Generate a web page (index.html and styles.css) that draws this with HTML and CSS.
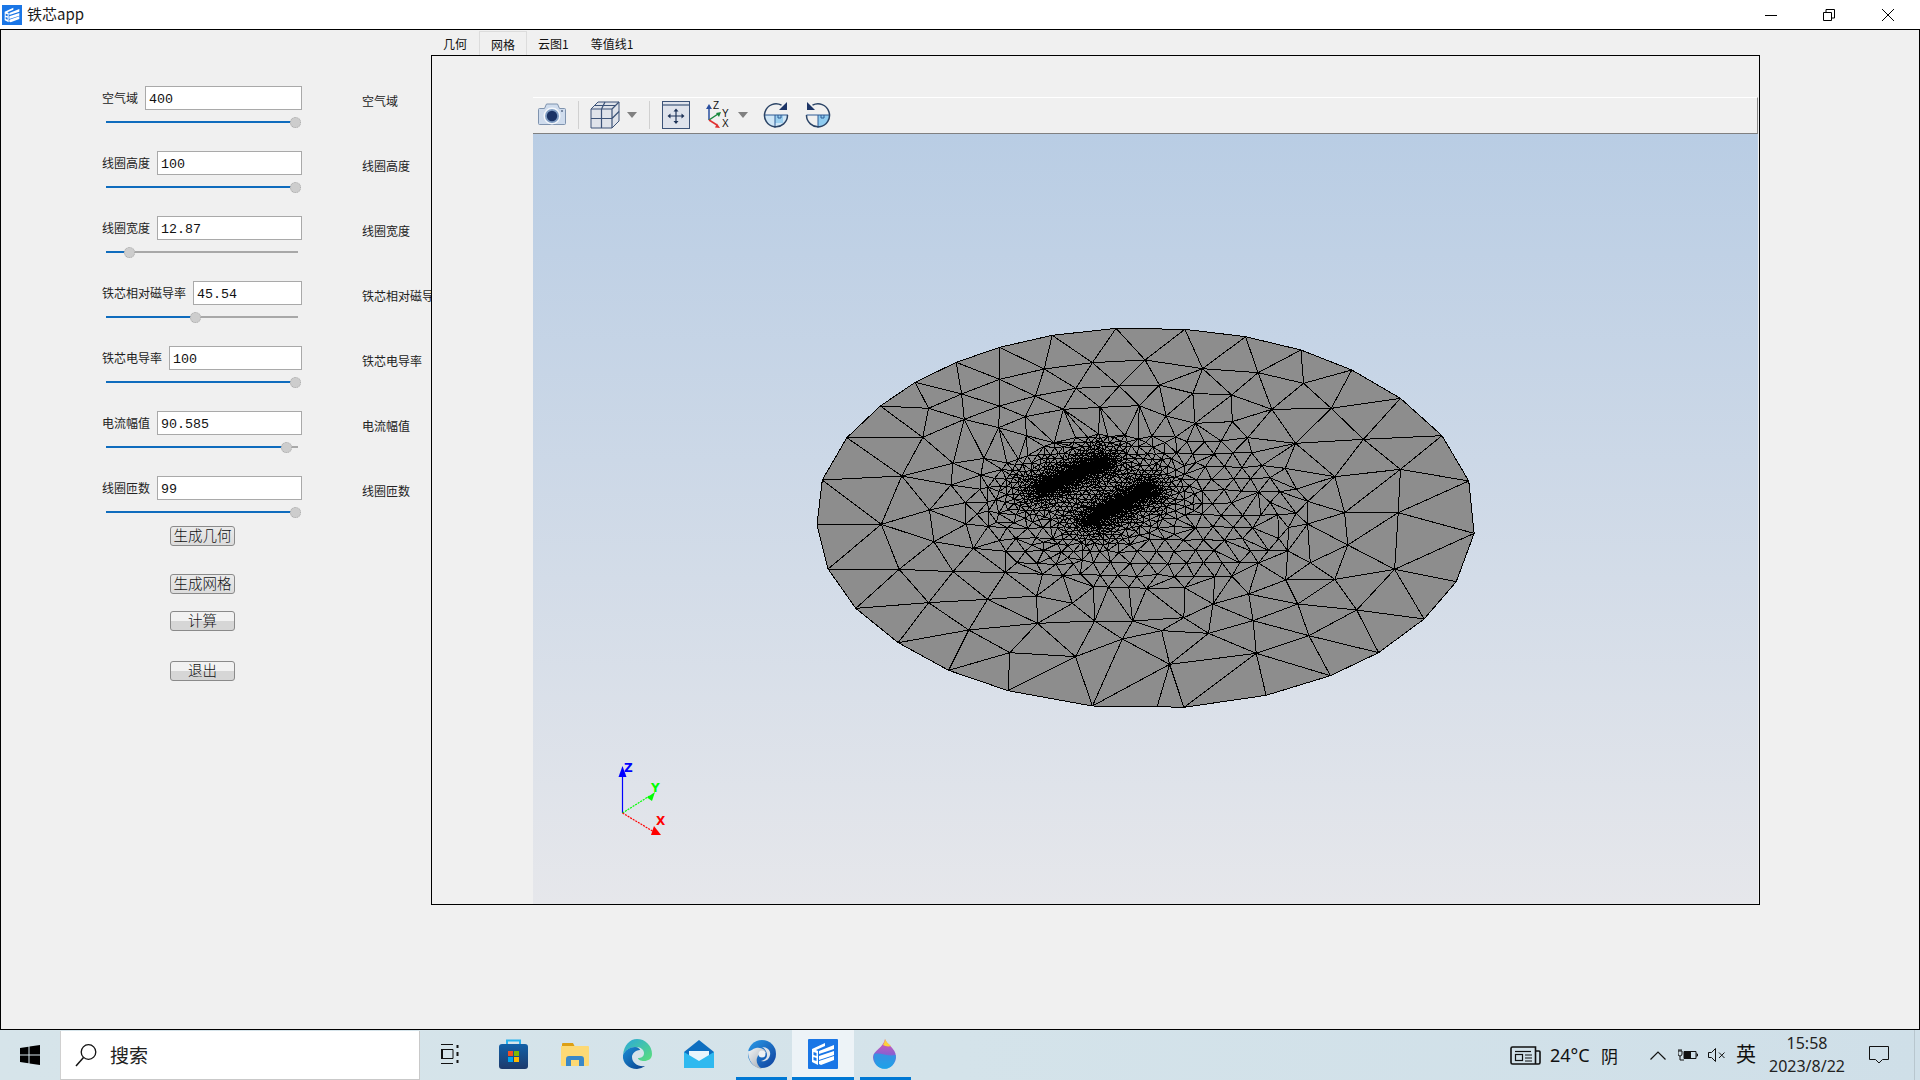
FILE: index.html
```html
<!DOCTYPE html>
<html lang="zh-CN">
<head>
<meta charset="utf-8">
<title>铁芯app</title>
<link rel="stylesheet" href="styles.css">
</head>
<body>
<div class="titlebar">
  <svg class="app-icon" width="20" height="20" viewBox="0 0 30 30"><rect width="30" height="30" fill="#1a76e6"/><path d="M4 10 17 4v3L8 11l2 1v14l-6-3z" fill="#fff"/><path d="M11 12l15-6v4l-15 5zM11 17l15-5v4l-15 5zM11 22l15-5v4l-13 5-2-1z" fill="#fff"/><path d="M5.500 13l3 1v3l-3-1zM5.500 18l3 1v3l-3-1z" fill="#1a76e6"/></svg>
  <span class="app-title">铁芯app</span>
  <div class="controls">
    <span class="ctl"><svg width="14" height="14" viewBox="0 0 14 14"><path d="M1 7.500h12" stroke="#000" fill="none"/></svg></span>
    <span class="ctl"><svg width="14" height="14" viewBox="0 0 14 14"><path d="M1.500 4.500h8v8h-8zM4 4.500V1.500h8.500v8.500h-3" stroke="#000" fill="none"/></svg></span>
    <span class="ctl"><svg width="14" height="14" viewBox="0 0 14 14"><path d="M1 1l12 12M13 1L1 13" stroke="#000" fill="none"/></svg></span>
  </div>
</div>

<div class="main">
  <div class="fields">
    <div class="field">
      <div class="field-head"><label class="field-label">空气域</label><input class="field-input" value="400"></div>
      <div class="slider"><div class="slider-fill" style="width:189px"></div><div class="slider-knob" style="left:189px"></div></div>
    </div>
    <div class="field">
      <div class="field-head"><label class="field-label">线圈高度</label><input class="field-input" value="100"></div>
      <div class="slider"><div class="slider-fill" style="width:189px"></div><div class="slider-knob" style="left:189px"></div></div>
    </div>
    <div class="field">
      <div class="field-head"><label class="field-label">线圈宽度</label><input class="field-input" value="12.87"></div>
      <div class="slider"><div class="slider-fill" style="width:23px"></div><div class="slider-knob" style="left:23px"></div></div>
    </div>
    <div class="field">
      <div class="field-head"><label class="field-label">铁芯相对磁导率</label><input class="field-input" value="45.54"></div>
      <div class="slider"><div class="slider-fill" style="width:89px"></div><div class="slider-knob" style="left:89px"></div></div>
    </div>
    <div class="field">
      <div class="field-head"><label class="field-label">铁芯电导率</label><input class="field-input" value="100"></div>
      <div class="slider"><div class="slider-fill" style="width:189px"></div><div class="slider-knob" style="left:189px"></div></div>
    </div>
    <div class="field">
      <div class="field-head"><label class="field-label">电流幅值</label><input class="field-input" value="90.585"></div>
      <div class="slider"><div class="slider-fill" style="width:180px"></div><div class="slider-knob" style="left:180px"></div></div>
    </div>
    <div class="field">
      <div class="field-head"><label class="field-label">线圈匝数</label><input class="field-input" value="99"></div>
      <div class="slider"><div class="slider-fill" style="width:189px"></div><div class="slider-knob" style="left:189px"></div></div>
    </div>
    <div class="actions">
      <button class="btn btn-a">生成几何</button>
      <button class="btn btn-b">生成网格</button>
      <button class="btn btn-c btn-split">计算</button>
      <button class="btn btn-d btn-split">退出</button>
    </div>
  </div>

  <div class="value-labels">
    <div class="value-label">空气域</div>
    <div class="value-label">线圈高度</div>
    <div class="value-label">线圈宽度</div>
    <div class="value-label">铁芯相对磁导率</div>
    <div class="value-label">铁芯电导率</div>
    <div class="value-label">电流幅值</div>
    <div class="value-label">线圈匝数</div>
  </div>

  <div class="tabs">
    <div class="tabbar">
      <span class="tab">几何</span>
      <span class="tab tab-active">网格</span>
      <span class="tab tab-narrow">云图1</span>
      <span class="tab tab-narrow">等值线1</span>
    </div>
    <div class="panel">
      <div class="viewer">
        <div class="toolbar">
          <svg class="tb-camera" width="28" height="23" viewBox="0 0 28 23"><path d="M1.500 5.500h5l2-4.500h11l2 4.500h5a1 1 0 0 1 1 1v14a1 1 0 0 1-1 1h-25a1 1 0 0 1-1-1v-14a1 1 0 0 1 1-1z" fill="#cfdced" stroke="#7f93ae"/><circle cx="14" cy="13" r="8.500" fill="#f4f7fb"/><circle cx="14" cy="13" r="7" fill="#7f9cc2"/><circle cx="14" cy="13" r="5.200" fill="#1c3466"/><circle cx="24" cy="8" r="1" fill="#5c6f8c"/></svg>
          <span class="tb-sep tb-sep-1"></span>
          <svg class="tb-cube" width="30" height="28" viewBox="0 0 30 28"><path d="M1 8 8 1h21v19l-7 7H1z" fill="#dfe3ea" stroke="#3c5378"/><path d="M1 8h21v19M22 8l7-7M1 17.500h21M11.500 8v19M4.500 4.500h21M15 1l-3.500 7M22 17.500l7-7" fill="none" stroke="#3c5378" stroke-width="1.200"/></svg>
          <svg class="tb-arrow tb-arrow-1" width="10" height="6" viewBox="0 0 10 6"><path d="M0 0h10L5 6z" fill="#808080"/></svg>
          <span class="tb-sep tb-sep-2"></span>
          <svg class="tb-fit" width="28" height="28" viewBox="0 0 28 28"><rect x=".5" y=".5" width="27" height="27" fill="#dfe3ec" stroke="#3c5378"/><path d="M1 4h26" stroke="#3c5378" stroke-width="1.200"/><path d="M14 10v10M8 15h12" stroke="#1e3358" stroke-width="1.200"/><path d="M14 7.500l2.500 3h-5zM14 23l2.500-3h-5zM5.500 15l3-2.500v5zM22.500 15l-3-2.500v5z" fill="#1e3358"/></svg>
          <svg class="tb-axes" width="32" height="30" viewBox="0 0 32 30"><path d="M4 20V7" stroke="#2a4fa0" stroke-width="1.500"/><path d="M4 4l3 5H1z" fill="#2a4fa0"/><path d="M4 20l9-6" stroke="#18883c" stroke-width="1.500"/><path d="M16 12l-2 5-3-4z" fill="#18883c"/><path d="M4 20l8 5" stroke="#e03030" stroke-width="1.500"/><path d="M15 28l-5-.5 2-4z" fill="#e03030"/><text x="8" y="9" class="axis-small">Z</text><text x="17" y="17" class="axis-small">Y</text><text x="17" y="27" class="axis-small">X</text></svg>
          <svg class="tb-arrow tb-arrow-2" width="10" height="6" viewBox="0 0 10 6"><path d="M0 0h10L5 6z" fill="#808080"/></svg>
          <svg class="tb-rot1" width="26" height="26" viewBox="0 0 26 26"><path d="M1.500 13h23a11.500 11.500 0 0 1-23 0z" fill="#cfe6f6"/><path d="M12 13h8v8h-8z" fill="#9cd0ef"/><path d="M12 13v13M1 13h24M15 13v3h3v-3" fill="none" stroke="#2f5b94"/><path d="M18.500 3.200A11.500 11.500 0 1 0 24.500 13" fill="none" stroke="#2b4466" stroke-width="1.500"/><path d="M24 0v8h-8z" fill="#1c3466"/></svg>
          <svg class="tb-rot2" width="26" height="26" viewBox="0 0 26 26"><path d="M13 13h11.500a11.500 11.500 0 0 1-11.500 11.500z" fill="#8fcbef"/><path d="M1.500 13h23M13 13v13M16 13v3h3v-3" fill="none" stroke="#2f5b94"/><path d="M7.500 3.200A11.500 11.500 0 1 1 1.500 13" fill="none" stroke="#2b4466" stroke-width="1.500"/><path d="M2 0v8h8z" fill="#1c3466"/></svg>
        </div>
        <div class="viewport">
          <svg class="mesh" viewBox="0 0 1568 1200" preserveAspectRatio="none" width="700" height="400">
            <path id="mesh-fill" fill="#8d8d8d" stroke="none"/>
            <path id="mesh-lines" fill="none" stroke="#000" stroke-width="1" vector-effect="non-scaling-stroke" shape-rendering="crispEdges"/>
            <path id="mesh-bars" fill="none" stroke="#000" stroke-width="11" stroke-linecap="round" vector-effect="non-scaling-stroke"/>
          </svg>
          <svg class="triad" width="60" height="76" viewBox="0 0 60 76">
            <path d="M13.500 54V18" stroke="#0000ff" stroke-width="1.200"/>
            <path d="M13.500 7l4 11h-8z" fill="#0000ff"/>
            <path d="M13.500 54l27-17" stroke="#00ff00" stroke-width="1.200" stroke-dasharray="2 1"/>
            <path d="M46 33l-3 9-5-3.500z" fill="#00ff00"/>
            <path d="M13.500 54l30 18" stroke="#ff0000" stroke-width="1.200" stroke-dasharray="2 1"/>
            <path d="M52 76h-10l3-9z" fill="#ff0000"/>
            <text class="axis-z" x="15" y="13">Z</text>
            <text class="axis-y" x="42" y="33">Y</text>
            <text class="axis-x" x="47" y="66">X</text>
          </svg>
        </div>
      </div>
    </div>
  </div>
</div>

<div class="taskbar">
  <div class="start">
    <svg width="20" height="20" viewBox="0 0 20 20"><path d="M0 3l8.500-1.300v7.800H0zM9.500 1.500 20 0v9.500H9.500zM0 10.500h8.500v7.800L0 17zM9.500 10.500H20V20L9.500 18.500z" fill="#000"/></svg>
  </div>
  <div class="search">
    <svg width="22" height="24" viewBox="0 0 22 24"><circle cx="13.500" cy="9" r="7.300" fill="none" stroke="#111" stroke-width="1.300"/><path d="M8.500 14.500 1 23" stroke="#111" stroke-width="1.500"/></svg>
    <span class="search-text">搜索</span>
  </div>
  <div class="tb-cell tb-taskview">
    <svg width="19" height="20" viewBox="0 0 19 20"><path d="M0 .5h12M0 19.500h12M0 5.500h12v9H0" fill="none" stroke="#111"/><path d="M1 5.500v9M16.500 1v3M16.500 8v4M16.500 16v3" fill="none" stroke="#111" stroke-width="2"/></svg>
  </div>
  <div class="tb-cell">
    <svg width="29" height="30" viewBox="0 0 29 30"><defs><linearGradient id="g-store" x1="0" y1="0" x2="0" y2="1"><stop offset="0" stop-color="#1261a8"/><stop offset="1" stop-color="#1d3a6c"/></linearGradient></defs><path d="M8 6V1.500h13V6" fill="none" stroke="#29b2ee" stroke-width="2"/><rect y="5" width="29" height="25" rx="3" fill="url(#g-store)"/><rect x="9" y="12" width="5" height="5" fill="#f25022"/><rect x="15" y="12" width="5" height="5" fill="#7fba00"/><rect x="9" y="18" width="5" height="5" fill="#00a4ef"/><rect x="15" y="18" width="5" height="5" fill="#ffb900"/></svg>
  </div>
  <div class="tb-cell">
    <svg width="28" height="24" viewBox="0 0 28 24"><path d="M1 2a1 1 0 0 1 1-1h10l2 4v4H1z" fill="#dd9f14"/><path d="M0 4h27a1 1 0 0 1 1 1v18a1 1 0 0 1-1 1H1a1 1 0 0 1-1-1z" fill="#fdd975"/><path d="M5 24v-7a3 3 0 0 1 3-3h12a3 3 0 0 1 3 3v7h-5v-6h-8v6z" fill="#3a88c8"/></svg>
  </div>
  <div class="tb-cell">
    <svg width="30" height="30" viewBox="0 0 30 30"><defs><linearGradient id="g-edge1" x1="0" y1="0" x2="1" y2="1"><stop offset="0" stop-color="#2aa7dc"/><stop offset="1" stop-color="#5ce07a"/></linearGradient><linearGradient id="g-edge2" x1="0" y1="0" x2="1" y2="1"><stop offset="0" stop-color="#1a8fd6"/><stop offset="1" stop-color="#0b3f8c"/></linearGradient></defs><path d="M15 0a15 15 0 0 1 15 15c0 5-4 7-8 7-3 0-6-1-6-3 3 0 6-1 6-5 0-3-3-6-8-6-6 0-11 3-13 8C2 6 8 0 15 0z" fill="url(#g-edge1)"/><path d="M1 16c2-5 7-8 12-8 3 0 5 2 5 3-5 0-8 4-8 7 0 6 6 10 13 9a15 15 0 0 1-8 3C7 30 0 24 1 16z" fill="url(#g-edge2)"/></svg>
  </div>
  <div class="tb-cell">
    <svg width="30" height="28" viewBox="0 0 30 28"><path d="M15 0 30 12v16H0V12z" fill="#0f6fc0"/><path d="M5 11h20v7l-10 6-10-6z" fill="#e9f5fc"/><path d="M0 12l15 9 15-9v16H0z" fill="#2fb9ef"/></svg>
  </div>
  <div class="tb-cell tb-open">
    <svg width="30" height="30" viewBox="0 0 30 30"><defs><linearGradient id="g-sw" x1="0" y1="0" x2="1" y2="1"><stop offset="0" stop-color="#2a9be8"/><stop offset="1" stop-color="#0f3f9c"/></linearGradient><linearGradient id="g-sw2" x1="0" y1="0" x2="1" y2="1"><stop offset="0" stop-color="#f4f6f8"/><stop offset="1" stop-color="#9aa2ab"/></linearGradient></defs><circle cx="16" cy="15" r="14" fill="url(#g-sw)"/><path d="M2 12c0 9 5 17 14 18-5-3-6-8-5-11 1-4 5-6 9-5-1-4-6-6-10-5-4 1-6 4-8 3z" fill="url(#g-sw2)"/><path d="M16 8c6 0 9 4 8 8-1 5-5 7-9 6 4-1 6-3 6-6 0-4-3-7-5-8z" fill="#dfe4ea"/><circle cx="16" cy="15" r="3.500" fill="#eef1f4"/></svg>
    <i class="tb-line"></i>
  </div>
  <div class="tb-cell tb-active">
    <svg width="30" height="30" viewBox="0 0 30 30"><rect width="30" height="30" rx="1" fill="#1a76e6"/><path d="M4 10 17 4v3L8 11l2 1v14l-6-3z" fill="#fff"/><path d="M11 12l15-6v4l-15 5zM11 17l15-5v4l-15 5zM11 22l15-5v4l-13 5-2-1z" fill="#fff"/><path d="M5.500 13l3 1v3l-3-1zM5.500 18l3 1v3l-3-1z" fill="#1a76e6"/></svg>
    <i class="tb-line tb-line-wide"></i>
  </div>
  <div class="tb-cell tb-open">
    <svg width="24" height="30" viewBox="0 0 24 30"><defs><linearGradient id="g-drop" x1="0" y1="0" x2="0" y2="1"><stop offset="0" stop-color="#e45bb0"/><stop offset=".5" stop-color="#8d5fd0"/><stop offset="1" stop-color="#1ea2e8"/></linearGradient></defs><path d="M12 0c1 5 11 9 11 18a11.500 11.500 0 0 1-23 0C0 12 11 8 12 0z" fill="url(#g-drop)"/><path d="M12 0c1 3 4 5 6 7-3 1-6 0-8-1 1-2 2-4 2-6z" fill="#fcd23a"/><path d="M1 15c6-2 14 3 22 1-1 9-6 14-11 14C6 30 0 24 1 15z" fill="#1ea2e8" opacity=".75"/></svg>
    <i class="tb-line"></i>
  </div>
  <div class="tray-spacer"></div>
  <div class="tray">
    <svg class="tray-news" width="31" height="19" viewBox="0 0 31 19"><path d="M1 2.500a1.500 1.500 0 0 1 1.500-1.500h23v17H2.500A1.500 1.500 0 0 1 1 16.500zM25.500 5H29a1 1 0 0 1 1 1v10.500a1.500 1.500 0 0 1-1.500 1.500h-3" fill="none" stroke="#111" stroke-width="1.600"/><path d="M5 5.500h16" stroke="#111" stroke-width="1.200"/><rect x="5.500" y="8.500" width="7" height="6" fill="none" stroke="#111" stroke-width="1.200"/><path d="M15 9h7M15 12h7M15 15h7" stroke="#111" stroke-width="1.200"/></svg>
    <span class="tray-temp">24°C</span>
    <span class="tray-weather">阴</span>
    <svg class="tray-caret" width="16" height="9" viewBox="0 0 16 9"><path d="M.5 8.500 8 1l7.500 7.500" fill="none" stroke="#111" stroke-width="1.200"/></svg>
    <svg class="tray-battery" width="20" height="12" viewBox="0 0 20 12"><path d="M6 2.500h12v7H6zM18 5h1.500v2H18" fill="none" stroke="#111"/><rect x="6" y="3" width="7" height="6" fill="#111"/><path d="M0 2h4v3a2 2 0 0 1-4 0zM1 0v2M3 0v2M2 7v4h4" fill="none" stroke="#111"/></svg>
    <svg class="tray-speaker" width="19" height="14" viewBox="0 0 19 14"><path d="M.5 4.500h3l4-4v13l-4-4h-3z" fill="none" stroke="#111"/><path d="M11 4.500l5.500 5.500M16.500 4.500 11 10" stroke="#111" fill="none"/></svg>
    <span class="tray-ime">英</span>
    <div class="clock"><span>15:58</span><span>2023/8/22</span></div>
    <svg class="tray-notify" width="20" height="18" viewBox="0 0 20 18"><path d="M.5.500h19v13h-6l-3.500 3.500-3.500-3.500h-6z" fill="none" stroke="#111"/></svg>
    <span class="show-desktop"></span>
  </div>
</div>
<script src="mesh.js"></script>
</body>
</html>
```

FILE: styles.css
```css
* { box-sizing: border-box; }
html, body { margin: 0; padding: 0; width: 1920px; height: 1080px; overflow: hidden; }
body { font-family: "Noto Sans CJK SC", "Noto Sans", sans-serif; color: #000; background: #f0f0f0; display: flex; flex-direction: column; }

.titlebar { height: 29px; background: #fff; display: flex; align-items: center; padding-left: 2px; }
.app-title { margin-left: 5px; font-size: 15px; line-height: 29px; margin-top: -2px; color: #1a1a1a; }
.controls { margin-left: auto; display: flex; padding-right: 3px; }
.ctl { width: 58.500px; height: 28px; display: flex; align-items: center; justify-content: center; }

.main { height: 1001px; border: 1px solid #000; background: #f0f0f0; display: flex; }
.fields { flex: none; width: 302px; padding: 56px 0 0 101px; display: flex; flex-direction: column; gap: 23px; }
.field { width: 200px; height: 42px; }
.field-head { display: flex; gap: 7px; height: 24px; align-items: center; }
.field-label { flex: none; font-size: 12px; line-height: 16px; margin-top: -1px; color: #222; white-space: nowrap; }
.field-input { flex: 1; min-width: 0; height: 24px; border: 1px solid #a9a9a9; background: #fff; padding: 2px 3px 0; font-family: "Liberation Mono", monospace; font-size: 13.330px; color: #111; outline: none; }
.slider { position: relative; margin: 6px 0 0 4px; width: 192px; height: 12px; }
.slider::before { content: ""; position: absolute; left: 0; right: 0; top: 5px; height: 2px; background: #a8a8a8; }
.slider-fill { position: absolute; left: 0; top: 5px; height: 2px; background: #0f6cbd; }
.slider-knob { position: absolute; top: 1px; width: 11px; height: 11px; margin-left: -5.500px; border-radius: 50%; background: #cdcdcd; border: 1px dotted #aaa; }

.actions { display: flex; flex-direction: column; align-items: flex-start; padding: 0 0 0 68px; margin-top: -15px; }
.btn { width: 65px; height: 20px; padding: 0 0 2px; border: 1px solid #8a8a8a; border-radius: 3px; background: linear-gradient(#ebebeb, #dcdcdc); font-family: "Noto Sans CJK SC", sans-serif; font-size: 14.500px; line-height: 16px; color: #111; font-weight: 300; }
.btn-split { background: linear-gradient(#f2f2f2 50%, #d6d6d6 50%); }
.btn-b { margin-top: 28px; }
.btn-c { margin-top: 17px; }
.btn-d { margin-top: 30px; }

.value-labels { flex: none; margin-left: 59px; width: 69px; padding-top: 59px; overflow: hidden; }
.value-label { height: 65px; font-size: 12px; line-height: 24px; white-space: nowrap; color: #222; }

.tabs { flex: none; width: 1329px; display: flex; flex-direction: column; }
.tabbar { height: 25px; display: flex; font-size: 12px; }
.tab { padding: 0 12px; height: 25px; line-height: 28px; color: #111; }
.tab-active { margin-top: 1px; height: 24px; line-height: 26px; padding: 0 11px; border: 1px solid #dcdcdc; border-bottom: 0; }
.tab-narrow { padding: 0 11px; }
.panel { height: 850px; border: 1px solid #000; padding: 41px 1px 0 101px; background: #f0f0f0; }
.viewer { height: 807px; display: flex; flex-direction: column; }
.toolbar { flex: none; height: 37px; padding-bottom: 2px; background: #f0f0f0; border-top: 1px solid #fff; border-right: 1px solid #8a8a8a; border-bottom: 1px solid #808080; display: flex; align-items: center; }
.tb-camera { margin-left: 5px; }
.tb-sep { width: 1px; height: 28px; background: #d0d0d0; }
.tb-sep-1 { margin-left: 12px; }
.tb-cube { margin-left: 11px; }
.tb-arrow-1 { margin-left: 7px; }
.tb-sep-2 { margin-left: 12px; }
.tb-fit { margin-left: 12px; }
.tb-axes { margin-left: 15px; }
.tb-arrow-2 { margin-left: 1px; }
.tb-rot1 { margin-left: 15px; }
.tb-rot2 { margin-left: 16px; }
.axis-small { font-family: "Liberation Sans", sans-serif; font-size: 10px; fill: #111; }

.viewport { position: relative; flex: 1; background: linear-gradient(#b9cde4, #e6e7eb); overflow: hidden; }
.mesh { position: absolute; left: 267px; top: 186px; }
.triad { position: absolute; left: 76px; top: 625px; }
.triad text { font-family: "DejaVu Sans", sans-serif; font-size: 12px; font-weight: 700; }
.axis-z { fill: #0000ff; }
.axis-y { fill: #00ff00; }
.axis-x { fill: #ff0000; }

.taskbar { height: 50px; background: linear-gradient(90deg, #d6e4ea, #d4e3ea 50%, #cfdfe8); display: flex; align-items: center; }
.start { flex: none; width: 60px; height: 50px; display: flex; align-items: center; justify-content: center; }
.search { flex: none; width: 360px; height: 49px; margin-top: 1px; background: #fff; border-right: 1px solid #c9c9c9; border-bottom: 1px solid #c9c9c9; border-left: 1px solid #d0d0d0; display: flex; align-items: center; padding-left: 14px; }
.search-text { margin-left: 13px; font-size: 19px; margin-top: -2px; color: #222; }
.tb-cell { position: relative; flex: none; width: 62px; height: 50px; display: flex; align-items: center; justify-content: center; padding-bottom: 2px; }
.tb-taskview { padding-right: 2px; }
.tb-active { background: #edf3f7; }
.tb-line { position: absolute; left: 5.500px; bottom: 0; width: 51px; height: 3px; background: #0078d4; }
.tb-line-wide { left: 0; width: 62px; }
.tray-spacer { flex: 1; }
.tray { flex: none; display: flex; align-items: center; height: 50px; color: #111; }
.tray-temp { width: 39px; margin-left: 9px; font-family: "Noto Sans", sans-serif; font-size: 18px; white-space: nowrap; }
.tray-weather { width: 17px; margin-left: 12px; font-size: 17px; }
.tray-caret { margin-left: 32px; }
.tray-battery { margin-left: 12px; }
.tray-speaker { margin-left: 10px; }
.tray-ime { width: 21px; margin-left: 9px; font-size: 20px; line-height: 24px; margin-top: -3px; }
.clock { width: 84px; margin-left: 8px; display: flex; flex-direction: column; align-items: center; font-family: "Noto Sans", sans-serif; font-size: 16px; line-height: 23px; color: #222; }
.tray-notify { margin-left: 20px; }
.show-desktop { width: 6px; height: 50px; margin-left: 25px; border-left: 1px solid #b8c6ce; }
```

FILE: mesh.js
```js
// Finite-element mesh of the air domain: hand-read boundary and outer nodes,
// graded interior nodes around the two coil sections, Delaunay-triangulated.
(function () {
  var outline = [[708,25],[862,28],[998,50],[1122,90],[1236,150],[1345,235],[1438,347],[1498,483],[1510,640],[1470,785],[1398,897],[1296,998],[1188,1067],[1044,1126],[860,1162],[800,1160],[655,1158],[466,1112],[333,1051],[220,968],[125,865],[63,747],[38,615],[50,480],[105,353],[180,258],[258,187],[350,127],[447,82],[565,46]];
  var fixed = [[655,128],[773,120],[902,146],[1026,158],[1128,190],[1190,265],[1262,358],[1345,448],[1340,578],[1332,748],[1247,870],[1140,947],[1022,1000],[828,1033],[617,1010],[470,998],[378,930],[288,848],[222,748],[182,613],[228,468],[275,352],[288,265],[362,222],[447,178],[547,147],
    [715,198],[805,195],[880,220],[967,225],[1057,268],[1110,370],[1198,470],[1220,578],[1227,675],[1198,778],[1115,852],[1015,902],[915,940],[810,932],[722,957],[532,910],[660,903],[420,838],[343,755],[300,665],[290,570],[338,495],[343,430],[368,298],[447,258],[527,228],[618,205],
    [505,290],[590,268],[672,262],[760,257],[820,288],[885,310],[968,305],[1003,353],[1087,445],[1137,612],[1143,728],[1088,780],[1005,822],[925,852],[860,893],[745,903],[610,850],[530,828],[460,757],[388,685],[372,612],[370,548],[405,465],[412,415],[445,323],[507,347]];
  var bars = [[[545,505],[675,428]],[[655,595],[775,510]]];

  function segDist(p, s) {
    var ax = s[0][0], ay = s[0][1], dx = s[1][0] - ax, dy = s[1][1] - ay;
    var t = ((p[0] - ax) * dx + (p[1] - ay) * dy) / (dx * dx + dy * dy);
    t = Math.max(0, Math.min(1, t));
    return Math.hypot(p[0] - ax - t * dx, p[1] - ay - t * dy);
  }
  function size(p) {
    var d = Math.min(segDist(p, bars[0]), segDist(p, bars[1]));
    if (d < 22) return 4 + 0.03 * d;
    return Math.min(42, 4.7 + 0.16 * (d - 22));
  }
  function inRegion(p) {
    var x = (p[0] - 770) / 385, y = (p[1] - 572) / 240;
    return x * x + y * y < 1;
  }

  var seed = 12345;
  function rnd() { seed = (seed * 16807) % 2147483647; return seed / 2147483647; }

  var pts = outline.concat(fixed);
  [42, 28, 20, 14, 10, 7, 5, 3.5].forEach(function (s) {
    var rowH = s * 0.866;
    for (var r = 0, y = 330; y < 820; r++, y += rowH) {
      for (var x = 380 + (r % 2) * s / 2; x < 1160; x += s) {
        var p = [x + (rnd() - 0.5) * s * 0.22, y + (rnd() - 0.5) * s * 0.22];
        if (!inRegion(p)) continue;
        var h = size(p);
        if (h > s * 1.35) continue;
        var ok = true;
        for (var i = 0; i < pts.length && ok; i++) {
          var ddx = pts[i][0] - p[0], ddy = pts[i][1] - p[1];
          if (ddx * ddx + ddy * ddy < h * h * 0.8) ok = false;
        }
        if (ok) pts.push(p);
      }
    }
  });

  // Bowyer-Watson
  var all = pts.concat([[-20000,-20000],[40000,-20000],[800,40000]]);
  var n = pts.length;
  function circum(a, b, c) {
    var A = all[a], B = all[b], C = all[c];
    var d = 2 * (A[0] * (B[1] - C[1]) + B[0] * (C[1] - A[1]) + C[0] * (A[1] - B[1]));
    var a2 = A[0] * A[0] + A[1] * A[1], b2 = B[0] * B[0] + B[1] * B[1], c2 = C[0] * C[0] + C[1] * C[1];
    var ux = (a2 * (B[1] - C[1]) + b2 * (C[1] - A[1]) + c2 * (A[1] - B[1])) / d;
    var uy = (a2 * (C[0] - B[0]) + b2 * (A[0] - C[0]) + c2 * (B[0] - A[0])) / d;
    return { a: a, b: b, c: c, x: ux, y: uy, r: (A[0] - ux) * (A[0] - ux) + (A[1] - uy) * (A[1] - uy) };
  }
  var tris = [circum(n, n + 1, n + 2)];
  for (var i = 0; i < n; i++) {
    var P = all[i], keep = [], edges = {};
    for (var t = 0; t < tris.length; t++) {
      var T = tris[t], dx = P[0] - T.x, dy = P[1] - T.y;
      if (dx * dx + dy * dy < T.r) {
        [[T.a, T.b], [T.b, T.c], [T.c, T.a]].forEach(function (e) {
          var k = Math.min(e[0], e[1]) + "_" + Math.max(e[0], e[1]);
          edges[k] = (edges[k] || 0) + 1;
        });
      } else keep.push(T);
    }
    Object.keys(edges).forEach(function (k) {
      if (edges[k] === 1) {
        var e = k.split("_");
        keep.push(circum(+e[0], +e[1], i));
      }
    });
    tris = keep;
  }

  function inside(x, y) {
    var c = false;
    for (var i = 0, j = outline.length - 1; i < outline.length; j = i++) {
      var a = outline[i], b = outline[j];
      if ((a[1] > y) !== (b[1] > y) && x < (b[0] - a[0]) * (y - a[1]) / (b[1] - a[1]) + a[0]) c = !c;
    }
    return c;
  }

  var seen = {}, d = "";
  function f(v) { return Math.round(v * 10) / 10; }
  tris.forEach(function (T) {
    if (T.a >= n || T.b >= n || T.c >= n) return;
    var A = all[T.a], B = all[T.b], C = all[T.c];
    if (!inside((A[0] + B[0] + C[0]) / 3, (A[1] + B[1] + C[1]) / 3)) return;
    [[T.a, T.b], [T.b, T.c], [T.c, T.a]].forEach(function (e) {
      var k = Math.min(e[0], e[1]) + "_" + Math.max(e[0], e[1]);
      if (seen[k]) return;
      seen[k] = 1;
      d += "M" + f(all[e[0]][0]) + " " + f(all[e[0]][1]) + "L" + f(all[e[1]][0]) + " " + f(all[e[1]][1]);
    });
  });

  var outlineD = "M" + outline.map(function (p) { return p.join(" "); }).join("L") + "Z";
  document.getElementById("mesh-fill").setAttribute("d", outlineD);
  document.getElementById("mesh-lines").setAttribute("d", d + outlineD);
  document.getElementById("mesh-bars").setAttribute("d", bars.map(function (s) {
    return "M" + s[0].join(" ") + "L" + s[1].join(" ");
  }).join(""));
})();
```
